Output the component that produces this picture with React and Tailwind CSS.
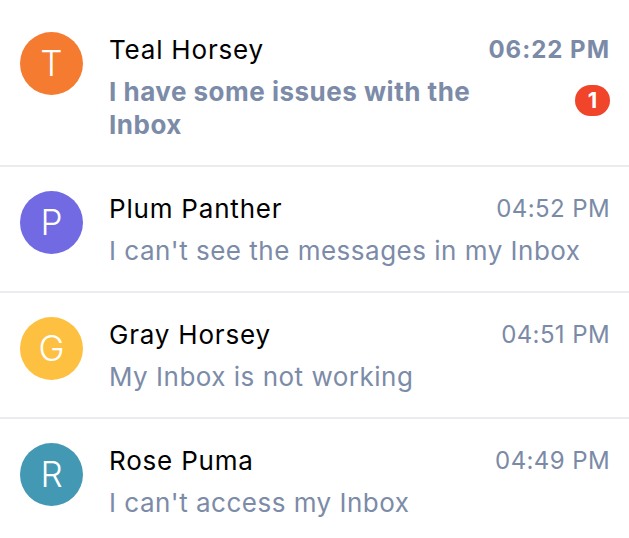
const chats = [
  { name: 'Teal Horsey', initial: 'T', color: 'bg-[#f47b30]', time: '06:22 PM', message: 'I have some issues with the Inbox', unread: 1 },
  { name: 'Plum Panther', initial: 'P', color: 'bg-[#716ae2]', time: '04:52 PM', message: "I can't see the messages in my Inbox" },
  { name: 'Gray Horsey', initial: 'G', color: 'bg-[#fdc041]', time: '04:51 PM', message: 'My Inbox is not working' },
  { name: 'Rose Puma', initial: 'R', color: 'bg-[#4399b3]', time: '04:49 PM', message: "I can't access my Inbox" },
]

function ChatRow({ chat }) {
  const unread = Boolean(chat.unread)
  return (
    <div className="flex items-start gap-[26px] border-b-2 border-[#ebebf0] py-6 pl-5 pr-[19px]">
      <div
        className={`flex h-[63px] w-[63px] shrink-0 items-center justify-center rounded-full text-[35px] font-light text-white ${chat.color}`}
      >
        {chat.initial}
      </div>
      <div className="min-w-0 flex-1 pt-[2px]">
        <div className="flex items-start justify-between gap-4">
          <div className="text-[26px] leading-[32px] tracking-[0.8px] text-black">{chat.name}</div>
          <div
            className={`shrink-0 text-[24px] leading-[32px] text-[#7b8aa6] ${
              unread ? 'font-bold tracking-[1px]' : 'tracking-[0.4px]'
            }`}
          >
            {chat.time}
          </div>
        </div>
        <div className="mt-[9px] flex items-start justify-between gap-6">
          <div
            className={`text-[26px] leading-[33px] tracking-[0.5px] text-[#7b8ba8] ${
              unread ? 'max-w-[420px] font-bold' : ''
            }`}
          >
            {chat.message}
          </div>
          {unread && (
            <span className="mt-[10px] flex h-[31px] min-w-[35px] shrink-0 items-center justify-center rounded-full bg-[#f0452a] text-[22px] font-bold text-white">
              {chat.unread}
            </span>
          )}
        </div>
      </div>
    </div>
  )
}

export default function App() {
  return (
    <div className="min-h-screen bg-white pt-2 font-['Inter',sans-serif]">
      {chats.map((chat) => (
        <ChatRow key={chat.name} chat={chat} />
      ))}
    </div>
  )
}
